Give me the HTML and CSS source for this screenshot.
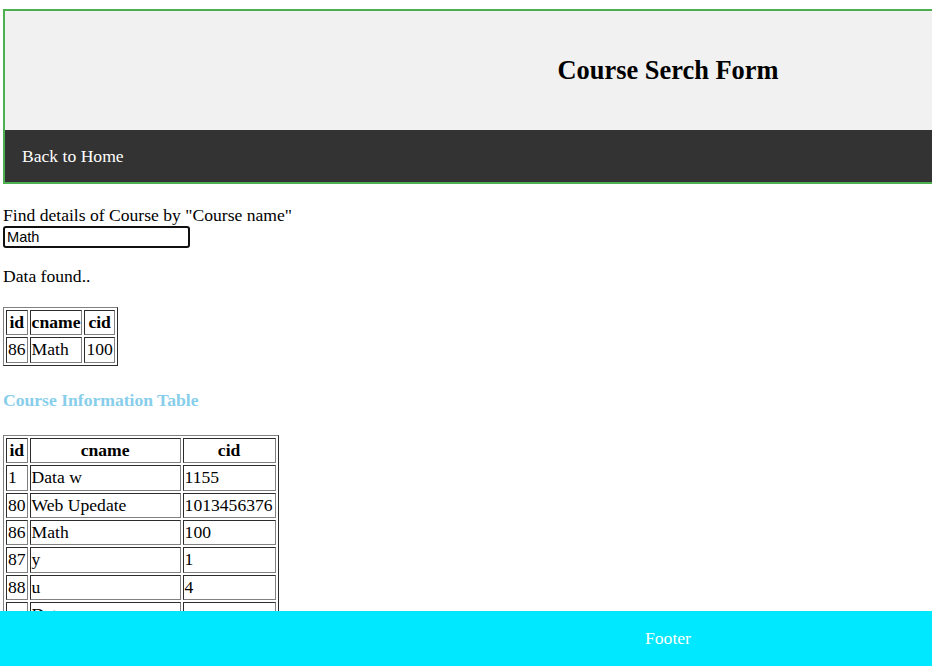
FILE: index.html
```html
<!DOCTYPE html>
<html lang="en">
<head>
<meta charset="utf-8">
<title>Course Serch Form</title>
<link rel="stylesheet" href="styles.css">
</head>
<body>
<header class="page-header">
  <div class="header-top">
    <h2 class="title">Course Serch Form</h2>
  </div>
  <nav class="topnav">
    <a class="nav-link" href="#">Back to Home</a>
  </nav>
</header>

<main class="content">
  <form class="search-form">
    <label class="search-label" for="cname">Find details of Course by "Course name"</label>
    <input class="search-input" id="cname" type="text" value="Math">
  </form>

  <p class="status">Data found..</p>

  <table class="data-table">
    <tr><th>id</th><th>cname</th><th>cid</th></tr>
    <tr><td>86</td><td>Math</td><td>100</td></tr>
  </table>

  <h4 class="section-title">Course Information Table</h4>

  <table class="data-table">
    <tr><th>id</th><th class="col-name">cname</th><th class="col-cid">cid</th></tr>
    <tr><td>1</td><td>Data w</td><td>1155</td></tr>
    <tr><td>80</td><td>Web Upedate</td><td>1013456376</td></tr>
    <tr><td>86</td><td>Math</td><td>100</td></tr>
    <tr><td>87</td><td>y</td><td>1</td></tr>
    <tr><td>88</td><td>u</td><td>4</td></tr>
    <tr><td>89</td><td>Data communication</td><td>4536</td></tr>
    <tr><td>90</td><td>Networks</td><td>2210</td></tr>
  </table>
</main>

<footer class="page-footer">Footer</footer>
</body>
</html>
```

FILE: styles.css
```css
html, body {
  overflow: hidden;
}

body {
  margin: 0;
  font-family: "Liberation Serif", "Times New Roman", serif;
  font-size: 17.6px;
  color: #000;
  background: #fff;
}

.page-header {
  width: 1326px;
  margin: 9px 0 0 3px;
  border: 2px solid #4caf50;
}

.header-top {
  height: 119px;
  background: #f1f1f1;
  display: flex;
  align-items: center;
  justify-content: center;
}

.title {
  margin: 0;
  font-size: 26.4px;
  font-weight: bold;
}

.topnav {
  height: 52px;
  background: #333;
  display: flex;
  align-items: center;
}

.nav-link {
  color: #fff;
  text-decoration: none;
  padding: 0 17px;
  font-size: 17.6px;
}

.content {
  margin-left: 3px;
  padding-top: 21px;
}

.search-form {
  margin: 0;
}

.search-label {
  display: block;
}

.search-input {
  display: block;
  box-sizing: border-box;
  width: 187px;
  height: 22px;
  margin: 0;
  padding: 1px 2px;
  border: 2px solid #101010;
  border-radius: 3px;
  outline: none;
  font-family: "Liberation Sans", Arial, sans-serif;
  font-size: 14.6px;
  color: #000;
  background: #fff;
}

.status {
  margin: 18px 0 20px 0;
}

.data-table {
  border: 1px outset #808080;
  border-collapse: separate;
  border-spacing: 2px;
  font-size: 17.6px;
}

.data-table th,
.data-table td {
  border: 1px inset #808080;
  padding: 1px;
  line-height: 21.4px;
  font-size: 17.6px;
}

.data-table td {
  text-align: left;
}

.col-name {
  width: 147px;
}

.col-cid {
  width: 89px;
}

.section-title {
  margin: 24px 0 24px 0;
  font-size: 17.6px;
  color: #87ceeb;
}

.page-footer {
  position: fixed;
  left: 0;
  bottom: 0;
  width: 1336px;
  height: 55px;
  line-height: 55px;
  text-align: center;
  background: #00e8ff;
  color: #fff;
  font-size: 17.6px;
}
```
